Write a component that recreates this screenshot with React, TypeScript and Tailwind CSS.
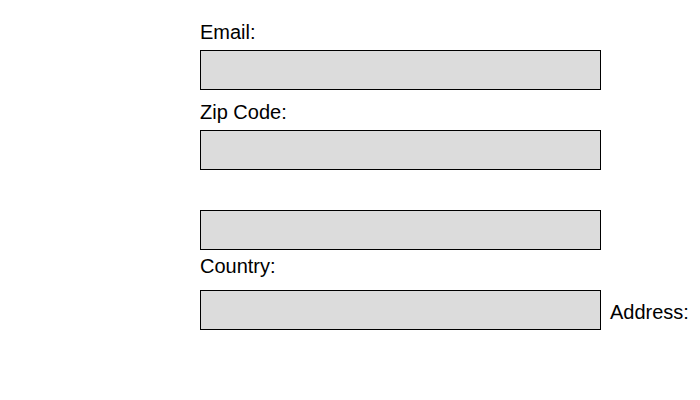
export default function App() {
  const box = "h-[40px] w-[401px] border border-black bg-[#dcdcdc]";
  return (
    <div className="w-[700px] h-[400px] bg-white pl-[200px] pt-[20px] font-['Liberation_Sans',Arial,sans-serif] text-[20px] text-black">
      <div className="h-[30px] leading-[25px]">Email:</div>
      <div className={box} />
      <div className="mt-[10px] h-[30px] leading-[25px]">Zip Code:</div>
      <div className={box} />
      <div className="mt-[10px] h-[30px]" />
      <div className={box} />
      <div className="h-[40px] leading-[33px]">Country:</div>
      <div className="flex items-start">
        <div className={box} />
        <div className="ml-[9px] pt-[7px] leading-[30px] whitespace-nowrap">Address:</div>
      </div>
    </div>
  );
}
